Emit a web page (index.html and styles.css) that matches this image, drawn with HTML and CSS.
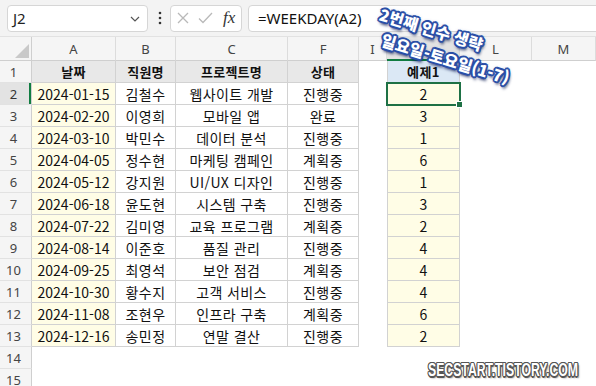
FILE: index.html
```html
<!DOCTYPE html>
<html lang="ko">
<head>
<meta charset="utf-8">
<link rel="stylesheet" href="styles.css">
</head>
<body>
<div class="fbar">
  <div class="namebox"><span>J2</span>
    <svg class="chev" width="10" height="6" viewBox="0 0 10 6"><path d="M1 1 L5 5 L9 1" fill="none" stroke="#555" stroke-width="1.2"/></svg>
  </div>
  <div class="dots"><svg width="4" height="14" viewBox="0 0 4 14"><circle cx="2" cy="2" r="1.3" fill="#333"/><circle cx="2" cy="7" r="1.3" fill="#333"/><circle cx="2" cy="12" r="1.3" fill="#333"/></svg></div>
  <div class="fxbox">
    <svg width="12" height="12" viewBox="0 0 12 12"><path d="M1 1 L11 11 M11 1 L1 11" stroke="#b9b9b9" stroke-width="1.3" fill="none"/></svg>
    <svg width="15" height="12" viewBox="0 0 15 12"><path d="M1 6.5 L5 10.5 L14 1" stroke="#b9b9b9" stroke-width="1.3" fill="none"/></svg>
    <span class="fx">fx</span>
  </div>
  <div class="finput">=WEEKDAY(A2)</div>
</div>

<div class="sheet">
  <div class="row colhdr">
    <div class="corner"><svg width="14" height="14" viewBox="0 0 14 14"><path d="M14 0 L14 14 L0 14 Z" fill="#c9c9c9"/></svg></div>
    <div class="ch">A</div><div class="ch">B</div><div class="ch">C</div><div class="ch">F</div><div class="ch">I</div><div class="ch sel">J</div><div class="ch">L</div><div class="ch">M</div>
  </div>
  <div class="row">
    <div class="rh">1</div>
    <div class="c t hd">날짜</div><div class="c t hd">직원명</div><div class="c t hd">프로젝트명</div><div class="c t hd">상태</div><div class="c"></div><div class="c t jl bl hb">예제1</div><div class="c"></div><div class="c"></div>
  </div>
  <div class="row">
    <div class="rh rsel">2</div>
    <div class="c t y num">2024-01-15</div><div class="c t">김철수</div><div class="c t">웹사이트 개발</div><div class="c t">진행중</div><div class="c"></div><div class="c t jl y num active">2</div><div class="c"></div><div class="c"></div>
  </div>
  <div class="row">
    <div class="rh">3</div>
    <div class="c t y num">2024-02-20</div><div class="c t">이영희</div><div class="c t">모바일 앱</div><div class="c t">완료</div><div class="c"></div><div class="c t jl y num">3</div><div class="c"></div><div class="c"></div>
  </div>
  <div class="row">
    <div class="rh">4</div>
    <div class="c t y num">2024-03-10</div><div class="c t">박민수</div><div class="c t">데이터 분석</div><div class="c t">진행중</div><div class="c"></div><div class="c t jl y num">1</div><div class="c"></div><div class="c"></div>
  </div>
  <div class="row">
    <div class="rh">5</div>
    <div class="c t y num">2024-04-05</div><div class="c t">정수현</div><div class="c t">마케팅 캠페인</div><div class="c t">계획중</div><div class="c"></div><div class="c t jl y num">6</div><div class="c"></div><div class="c"></div>
  </div>
  <div class="row">
    <div class="rh">6</div>
    <div class="c t y num">2024-05-12</div><div class="c t">강지원</div><div class="c t">UI/UX 디자인</div><div class="c t">진행중</div><div class="c"></div><div class="c t jl y num">1</div><div class="c"></div><div class="c"></div>
  </div>
  <div class="row">
    <div class="rh">7</div>
    <div class="c t y num">2024-06-18</div><div class="c t">윤도현</div><div class="c t">시스템 구축</div><div class="c t">진행중</div><div class="c"></div><div class="c t jl y num">3</div><div class="c"></div><div class="c"></div>
  </div>
  <div class="row">
    <div class="rh">8</div>
    <div class="c t y num">2024-07-22</div><div class="c t">김미영</div><div class="c t">교육 프로그램</div><div class="c t">계획중</div><div class="c"></div><div class="c t jl y num">2</div><div class="c"></div><div class="c"></div>
  </div>
  <div class="row">
    <div class="rh">9</div>
    <div class="c t y num">2024-08-14</div><div class="c t">이준호</div><div class="c t">품질 관리</div><div class="c t">진행중</div><div class="c"></div><div class="c t jl y num">4</div><div class="c"></div><div class="c"></div>
  </div>
  <div class="row">
    <div class="rh">10</div>
    <div class="c t y num">2024-09-25</div><div class="c t">최영석</div><div class="c t">보안 점검</div><div class="c t">계획중</div><div class="c"></div><div class="c t jl y num">4</div><div class="c"></div><div class="c"></div>
  </div>
  <div class="row">
    <div class="rh">11</div>
    <div class="c t y num">2024-10-30</div><div class="c t">황수지</div><div class="c t">고객 서비스</div><div class="c t">진행중</div><div class="c"></div><div class="c t jl y num">4</div><div class="c"></div><div class="c"></div>
  </div>
  <div class="row">
    <div class="rh">12</div>
    <div class="c t y num">2024-11-08</div><div class="c t">조현우</div><div class="c t">인프라 구축</div><div class="c t">계획중</div><div class="c"></div><div class="c t jl y num">6</div><div class="c"></div><div class="c"></div>
  </div>
  <div class="row">
    <div class="rh">13</div>
    <div class="c t y num">2024-12-16</div><div class="c t">송민정</div><div class="c t">연말 결산</div><div class="c t">진행중</div><div class="c"></div><div class="c t jl y num">2</div><div class="c"></div><div class="c"></div>
  </div>
  <div class="row">
    <div class="rh">14</div>
    <div class="c"></div><div class="c"></div><div class="c"></div><div class="c"></div><div class="c"></div><div class="c"></div><div class="c"></div><div class="c"></div>
  </div>
  <div class="row">
    <div class="rh">15</div>
    <div class="c"></div><div class="c"></div><div class="c"></div><div class="c"></div><div class="c"></div><div class="c"></div><div class="c"></div><div class="c"></div>
  </div>
</div>

<div class="note">
  <div class="l1">2번째 인수 생략</div>
  <div class="l2">일요일-토요일(1-7)</div>
</div>

<div class="wm">SECSTART.TISTORY.COM</div>
</body>
</html>
```

FILE: styles.css
```css
* { box-sizing: border-box; }
html, body {
  margin: 0;
  padding: 0;
  width: 596px;
  height: 386px;
  overflow: hidden;
  background: #fff;
}
body {
  position: relative;
  font-family: "Noto Sans CJK KR", "Noto Sans", sans-serif;
  color: #111;
}

/* formula bar */
.fbar {
  height: 37px;
  background: #f3f3f3;
  border-bottom: 1px solid #e2e2e2;
  display: flex;
  align-items: center;
  padding-left: 7px;
}
.namebox {
  width: 141px;
  height: 27px;
  background: #fff;
  border: 1px solid #d6d6d6;
  border-radius: 4px;
  display: flex;
  align-items: center;
  justify-content: space-between;
  padding: 0 7px 0 5px;
  font-family: "Noto Sans", sans-serif;
  font-size: 15px;
  color: #222;
}
.chev { margin-top: 1px; }
.dots {
  width: 22px;
  display: flex;
  justify-content: center;
  padding-left: 1px;
}
.fxbox {
  width: 72px;
  height: 27px;
  background: #fff;
  border: 1px solid #d6d6d6;
  border-radius: 4px;
  display: flex;
  align-items: center;
  padding-left: 6px;
  gap: 9px;
}
.fx {
  font-family: "Liberation Serif", serif;
  font-style: italic;
  font-size: 17px;
  color: #333;
  margin-left: 1px;
}
.finput {
  flex: 1;
  margin-left: 6px;
  margin-right: -8px;
  height: 27px;
  background: #fff;
  border: 1px solid #d6d6d6;
  border-radius: 4px;
  display: flex;
  align-items: center;
  padding-left: 9px;
  font-family: "Noto Sans", sans-serif;
  font-size: 15px;
  color: #111;
}

/* sheet */
.row {
  display: grid;
  grid-template-columns: 32px 84px 60px 112px 71px 28px 73px 72px 64px;
  height: 22px;
}
.colhdr {
  height: 24px;
  background: #f5f5f5;
}
.corner {
  border-right: 1px solid #cfcfcf;
  border-bottom: 1px solid #cfcfcf;
  display: flex;
  align-items: flex-end;
  justify-content: flex-end;
  padding: 0 2px 2px 0;
}
.ch {
  border-right: 1px solid #dcdcdc;
  border-bottom: 1px solid #cfcfcf;
  display: flex;
  align-items: center;
  justify-content: center;
  font-family: "Noto Sans", sans-serif;
  font-size: 13px;
  color: #444;
}
.ch.sel {
  background: #e3e3e3;
  color: #107c41;
  border-bottom: 2px solid #107c41;
}
.rh {
  background: #f5f5f5;
  border-right: 1px solid #cfcfcf;
  border-bottom: 1px solid #e2e2e2;
  display: flex;
  align-items: center;
  justify-content: center;
  padding-right: 4px;
  font-family: "Noto Sans", sans-serif;
  font-size: 13px;
  color: #444;
}
.rh.rsel {
  background: #e3e3e3;
  color: #333;
  box-shadow: inset -2px 0 0 #107c41;
}
.c {
  display: flex;
  align-items: center;
  justify-content: center;
  font-size: 14px;
  white-space: nowrap;
  overflow: hidden;
  color: #111;
}
.t {
  border-right: 1px solid #d2d2d2;
  border-bottom: 1px solid #d2d2d2;
  letter-spacing: 0.4px;
}
.num { letter-spacing: 0; }
.jl { border-left: 1px solid #d2d2d2; }
.hd {
  background: #e8e8e8;
  font-weight: 700;
  font-size: 13px;
  letter-spacing: 0.2px;
}
.hb {
  font-weight: 700;
  font-size: 13px;
}
.bl { background: #dbe8f5; }
.y { background: #fffde6; }
.active {
  position: relative;
  overflow: visible;
  outline: 2px solid #1e7145;
  outline-offset: -1px;
  z-index: 2;
}
.active::after {
  content: "";
  position: absolute;
  right: -4px;
  bottom: -4px;
  width: 5px;
  height: 5px;
  background: #1e7145;
  border: 1px solid #fff;
}

/* annotation */
.note {
  position: absolute;
  left: 374px;
  top: 20px;
  width: 132px;
  transform: rotate(17deg);
  transform-origin: center;
  font-family: "Noto Sans CJK KR", sans-serif;
  font-weight: 900;
  font-size: 16px;
  line-height: 24px;
  color: #fff;
  white-space: nowrap;
  z-index: 5;
  text-shadow:
    2px 0 0 #2a4ea6, -2px 0 0 #2a4ea6, 0 2px 0 #2a4ea6, 0 -2px 0 #2a4ea6,
    1.4px 1.4px 0 #2a4ea6, -1.4px -1.4px 0 #2a4ea6, 1.4px -1.4px 0 #2a4ea6, -1.4px 1.4px 0 #2a4ea6,
    2px 3px 3px rgba(10, 25, 80, 0.8), 0 0 4px rgba(40, 70, 160, 0.7);
}
.l2 { padding-left: 9px; }

/* watermark */
.wm {
  position: absolute;
  left: 428px;
  top: 360px;
  font-family: "Liberation Sans", sans-serif;
  font-weight: 700;
  font-size: 18px;
  line-height: 20px;
  color: #fff;
  white-space: nowrap;
  transform: scaleX(0.68);
  transform-origin: left center;
  letter-spacing: 0;
  text-shadow:
    1.5px 0 0 #555, -1.5px 0 0 #555, 0 1.5px 0 #555, 0 -1.5px 0 #555,
    1px 1px 0 #555, -1px -1px 0 #555, 1px -1px 0 #555, -1px 1px 0 #555,
    2px 2px 2px rgba(0, 0, 0, 0.6);
}
```
